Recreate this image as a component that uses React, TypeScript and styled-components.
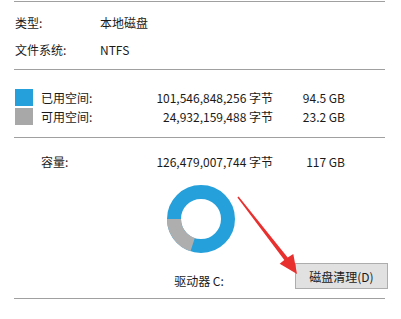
import React from "react";
import styled, { createGlobalStyle } from "styled-components";

const Global = createGlobalStyle`
  html, body { margin: 0; padding: 0; background: #ffffff; }
  body {
    font-family: "Microsoft YaHei", "Noto Sans CJK SC", "Noto Sans", sans-serif;
    font-size: 12px;
    color: #1a1a1a;
  }
`;

const Page = styled.div`
  position: relative;
  width: 401px;
  height: 319px;
  overflow: hidden;
  background: #fff;
  padding-top: 1px;
  box-sizing: border-box;
`;

const Divider = styled.div<{ $mt?: number }>`
  margin: ${(p) => p.$mt ?? 0}px 16px 0 14px;
  height: 1px;
  background: #a0a0a0;
  flex-shrink: 0;
`;

const InfoBlock = styled.div`
  display: flex;
  flex-direction: column;
  gap: 9px;
  padding: 12px 0 0 15px;
  height: 67px;
  box-sizing: border-box;
`;

const InfoRow = styled.div`
  display: grid;
  grid-template-columns: 85px auto;
  line-height: 18px;
  height: 18px;
`;

const SpaceBlock = styled.div`
  display: flex;
  flex-direction: column;
  gap: 2px;
  padding: 19px 0 0 15px;
  height: 67px;
  box-sizing: border-box;
`;

const SpaceRow = styled.div`
  display: grid;
  grid-template-columns: 26px 90px 142px 72px;
  align-items: center;
  height: 17px;
  line-height: 17px;
`;

const Swatch = styled.div<{ $color: string }>`
  width: 18px;
  height: 17px;
  background: ${(p) => p.$color};
`;

const Num = styled.div`
  text-align: right;
  white-space: nowrap;
`;

const CapacityRow = styled(SpaceRow)`
  margin: 15px 0 0 15px;
`;

const ChartArea = styled.div`
  display: flex;
  justify-content: center;
  margin-top: 14px;
  padding-left: 1px;
  height: 70px;
`;

const BottomRow = styled.div`
  display: grid;
  grid-template-columns: 1fr auto 1fr;
  align-items: end;
  margin-top: 9px;
  height: 26px;
`;

const DriveLabel = styled.div`
  grid-column: 2;
  line-height: 18px;
  margin-bottom: -1px;
  padding-right: 3px;
`;

const CleanButton = styled.button`
  grid-column: 3;
  justify-self: end;
  align-self: start;
  margin-right: 13px;
  width: 93px;
  height: 26px;
  background: #e1e1e1;
  border: 1px solid #adadad;
  font-family: inherit;
  font-size: 12px;
  color: #1a1a1a;
  padding: 0;
`;

const ArrowLayer = styled.svg`
  position: absolute;
  left: 0;
  top: 0;
  pointer-events: none;
`;

const Donut = () => {
  const cx = 35, cy = 35, r = 27;
  const a1 = (108 * Math.PI) / 180;
  const x1 = cx + r * Math.cos(a1);
  const y1 = cy + r * Math.sin(a1);
  return (
    <svg width="70" height="70" viewBox="0 0 70 70">
      <circle cx={cx} cy={cy} r={r} fill="none" stroke="#26a0da" strokeWidth="14" />
      <path
        d={`M ${x1} ${y1} A ${r} ${r} 0 0 1 ${cx - r} ${cy}`}
        fill="none"
        stroke="#aeaeae"
        strokeWidth="14"
      />
    </svg>
  );
};

export default function App() {
  return (
    <>
      <Global />
      <Page>
        <Divider />
        <InfoBlock>
          <InfoRow>
            <span>类型:</span>
            <span>本地磁盘</span>
          </InfoRow>
          <InfoRow>
            <span>文件系统:</span>
            <span>NTFS</span>
          </InfoRow>
        </InfoBlock>
        <Divider />
        <SpaceBlock>
          <SpaceRow>
            <Swatch $color="#26a0da" />
            <span>已用空间:</span>
            <Num>101,546,848,256 字节</Num>
            <Num>94.5 GB</Num>
          </SpaceRow>
          <SpaceRow>
            <Swatch $color="#a8a8a8" />
            <span>可用空间:</span>
            <Num>24,932,159,488 字节</Num>
            <Num>23.2 GB</Num>
          </SpaceRow>
        </SpaceBlock>
        <Divider />
        <CapacityRow>
          <span />
          <span>容量:</span>
          <Num>126,479,007,744 字节</Num>
          <Num>117 GB</Num>
        </CapacityRow>
        <ChartArea>
          <Donut />
        </ChartArea>
        <BottomRow>
          <DriveLabel>驱动器 C:</DriveLabel>
          <CleanButton>磁盘清理(D)</CleanButton>
        </BottomRow>
        <Divider $mt={9} />
        <ArrowLayer width="401" height="319" viewBox="0 0 401 319">
          <polygon
            points="237.4,197.5 284.3,260.1 279.7,263.7 297,274 293.3,253.9 287.7,257.5 238.6,196.5"
            fill="#e8302f"
          />
        </ArrowLayer>
      </Page>
    </>
  );
}
